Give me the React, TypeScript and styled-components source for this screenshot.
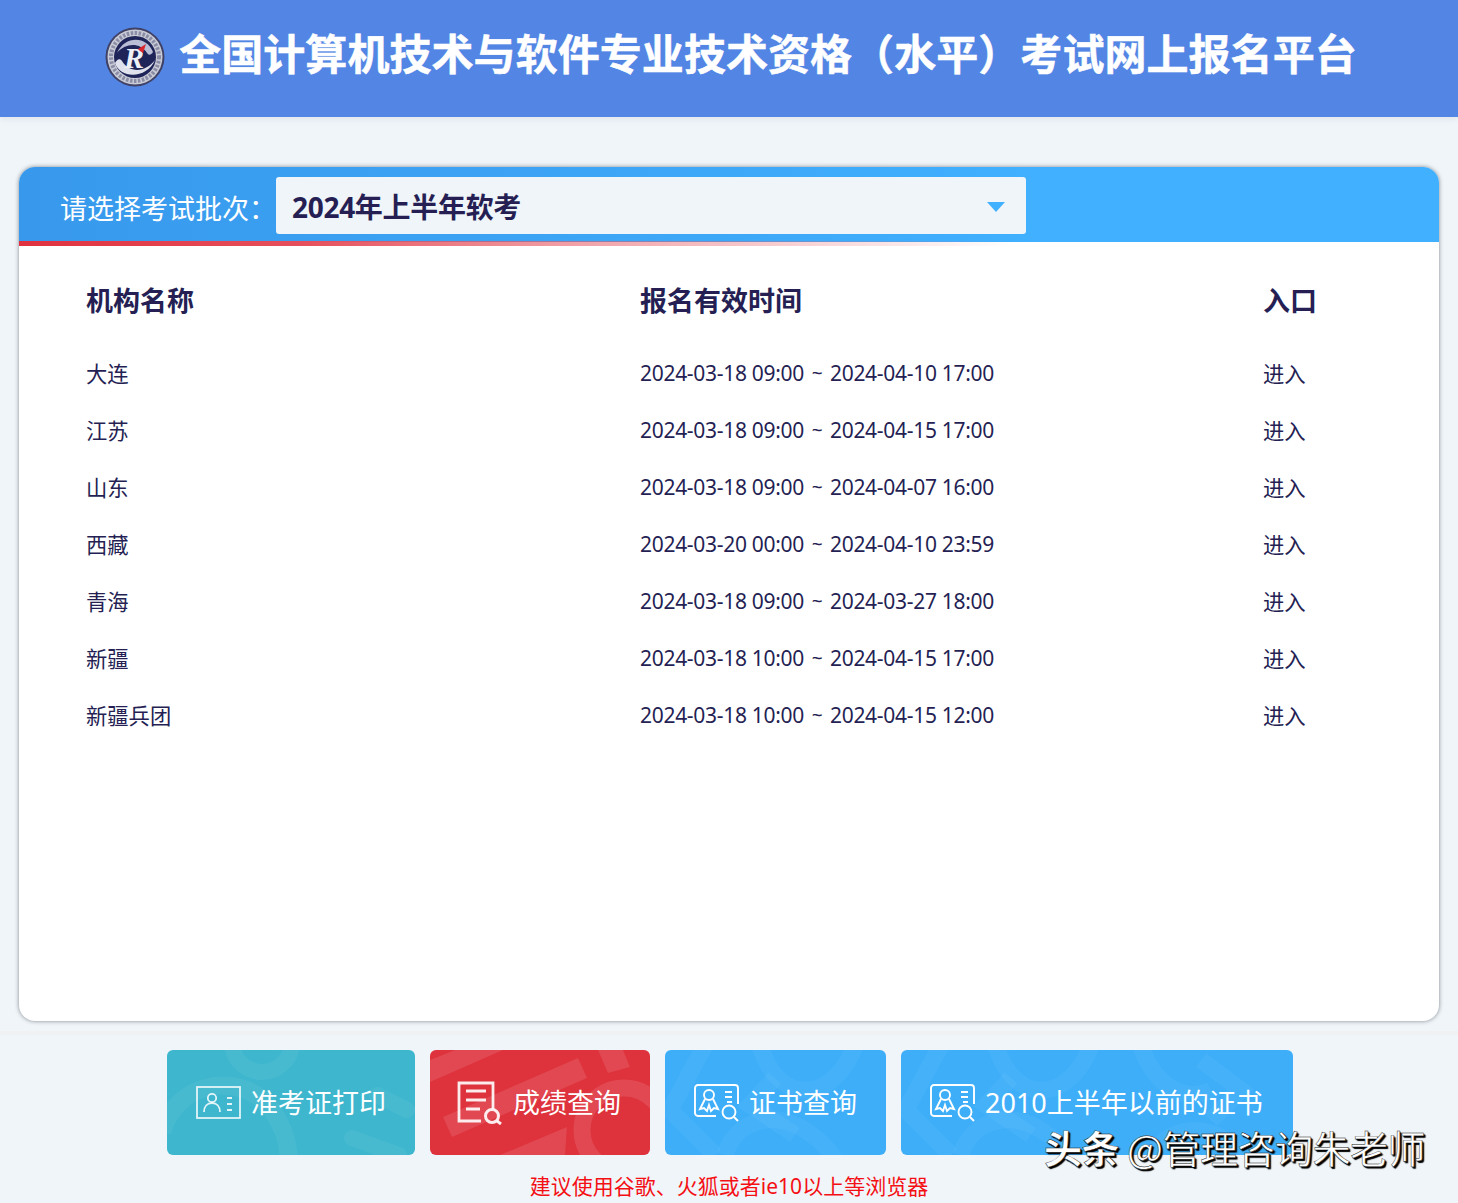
import React from "react";
import styled, { createGlobalStyle } from "styled-components";

const CJK = `"Noto Sans", "Noto Sans CJK SC", sans-serif`;
const INK = "#251f54";

const Global = createGlobalStyle`
  html, body { margin: 0; padding: 0; background: #f0f5f9; }
  body { font-family: ${CJK}; color: ${INK}; }
  * { box-sizing: border-box; }
`;

const Page = styled.div`
  position: relative;
  width: 1458px;
  height: 1203px;
  overflow: hidden;
  background: #f0f5f9;
`;

const Banner = styled.header`
  height: 117px;
  background: #5386e4;
  display: flex;
  align-items: center;
  justify-content: center;
  gap: 14px;
  padding: 0 0 4px 4px;
  box-shadow: 0 2px 6px rgba(120, 140, 170, 0.15);
`;

const Title = styled.h1`
  margin: 0;
  padding-bottom: 6px;
  font-size: 42px;
  line-height: 60px;
  font-weight: 700;
  letter-spacing: 0.06px;
  color: #fff;
  white-space: nowrap;
  -webkit-text-stroke: 0.5px #fff;
`;

const Card = styled.section`
  margin: 50px 19px 0 19px;
  height: 854px;
  background: #fff;
  border-radius: 16px;
  box-shadow: 0 0 4px rgba(50, 60, 70, 0.6);
  overflow: hidden;
`;

const CardHead = styled.div`
  position: relative;
  height: 75px;
  padding: 10px 0 0 41px;
  display: flex;
  align-items: flex-start;
  background: linear-gradient(90deg, #3899ec 0%, #3ea8f8 50%, #40b0ff 72%, #40b0ff 100%);

  &::after {
    content: "";
    position: absolute;
    left: 0;
    right: 0;
    bottom: -4px;
    height: 5px;
    background: linear-gradient(90deg, #e0323f 0%, #e5505c 20%, rgba(230, 90, 100, 0.55) 40%, rgba(230, 90, 100, 0) 70%);
  }
`;

const HeadLabel = styled.span`
  width: 216px;
  padding-top: 2px;
  font-size: 27px;
  line-height: 60px;
  color: #fff;
  white-space: nowrap;
`;

const Picker = styled.div`
  width: 750px;
  height: 57px;
  background: #f0f5f9;
  border-radius: 3px;
  display: flex;
  align-items: center;
  justify-content: space-between;
  padding: 0 21px 0 16px;
  font-size: 28px;
  font-weight: 700;
  letter-spacing: -0.3px;
  color: ${INK};
`;

const Caret = styled.i`
  width: 0;
  height: 0;
  margin-top: 3px;
  border-left: 9px solid transparent;
  border-right: 9px solid transparent;
  border-top: 10px solid #40b0ff;
`;

const Table = styled.div`
  padding: 29px 0 0 67px;
  position: relative;
`;

const Row = styled.div<{ $head?: boolean }>`
  display: grid;
  grid-template-columns: 554px 623px 1fr;
  height: 57px;
  align-items: center;
  font-size: ${(p) => (p.$head ? "27px" : "21.3px")};
  font-weight: ${(p) => (p.$head ? 700 : 400)};
  color: ${INK};
  margin-bottom: ${(p) => (p.$head ? "16px" : "0")};
  white-space: nowrap;
`;

const Org = styled.span`
  font-size: inherit;
`;

const Period = styled.span`
  font-family: "Noto Sans", sans-serif;
  font-size: 21px;
  letter-spacing: -0.3px;
  display: flex;
  align-items: center;
`;

const Tilde = styled.span`
  width: 26px;
  text-align: center;
  font-size: 19px;
`;

const HeadCell = styled.span`
  font-size: 27px;
`;

const Divider = styled.div`
  height: 4px;
  margin-top: 10px;
  background: #f0f1f2;
`;

const Actions = styled.nav`
  display: flex;
  gap: 15px;
  padding: 15px 0 0 167px;
`;

const Action = styled.a<{ $w: number; $bg: string; $gap: number; $pad: number }>`
  position: relative;
  overflow: hidden;
  width: ${(p) => p.$w}px;
  height: 105px;
  border-radius: 6px;
  background: ${(p) => p.$bg};
  color: #fff;
  display: flex;
  align-items: center;
  gap: ${(p) => p.$gap}px;
  padding-left: ${(p) => p.$pad}px;
  font-size: 27px;
  white-space: nowrap;
`;

const Decor = styled.svg`
  position: absolute;
  inset: 0;
  width: 100%;
  height: 100%;
`;

const ActionIcon = styled.svg`
  position: relative;
  flex: none;
`;

const ActionLabel = styled.span`
  position: relative;
  padding-bottom: 2px;
`;

const Note = styled.p`
  margin: 15px 0 0;
  text-align: center;
  font-size: 21px;
  line-height: 32px;
  color: #f40f14;
`;

const Watermark = styled.div`
  position: absolute;
  left: 1044px;
  top: 1121px;
  font-size: 38px;
  line-height: 52px;
  font-family: "Noto Sans CJK SC", "Noto Sans", sans-serif;
  color: #fff;
  white-space: nowrap;
  letter-spacing: -0.5px;
  text-shadow: 2px 2px 1px #000, 1px 1px 1px #000;
  -webkit-text-stroke: 0.4px #111;
`;

const WatermarkBrand = styled.b`
  font-weight: 700;
`;

const Logo = () => (
  <svg width="60" height="60" viewBox="0 0 60 60">
    <circle cx="30" cy="30" r="29.5" fill="#3f4166" />
    <circle cx="30" cy="30" r="27.500" fill="#c9cbd6" />
    <circle cx="30" cy="30" r="24" fill="none" stroke="#8a8da5" strokeWidth="4" strokeDasharray="2.500 1.500" />
    <circle cx="30" cy="30" r="21" fill="#1f2558" />
    <path d="M10 36C15 52 42 52 50 33C41 45 25 47 17 34C15 31 12 32 10 36Z" fill="#dfe2ec" />
    <path d="M48 25C42 9 20 8 12 26C20 16 35 15 42 26C44 29 46 28 48 25Z" fill="#b9bed6" />
    <text x="29" y="41" fontSize="30" fontStyle="italic" fontWeight="700" fontFamily="'Liberation Serif', serif" textAnchor="middle" fill="#eef0f6">R</text>
    <path d="M33 22L41 17L38 26L35 24Z" fill="#d8252e" />
  </svg>
);

const CardIcon = () => (
  <ActionIcon width="46" height="34" viewBox="0 0 46 34" fill="none" stroke="#fff" strokeOpacity="0.85">
    <rect x="1" y="1" width="43" height="31" strokeWidth="1.8" />
    <circle cx="16" cy="12" r="4.2" strokeWidth="1.8" />
    <path d="M8 26c0-6 3.500-9 8-9s8 3 8 9" strokeWidth="1.8" />
    <path d="M31 12h5M31 18h5M31 24h5" strokeWidth="2" />
  </ActionIcon>
);

const ReportIcon = () => (
  <ActionIcon width="46" height="44" viewBox="0 0 46 44" fill="none" stroke="#fff" strokeOpacity="0.9" strokeWidth="2.8">
    <path d="M24 40H2V2h34v26" />
    <path d="M9 10h20M9 19h20M9 28h14" />
    <circle cx="35" cy="35" r="6.500" strokeWidth="3" />
    <path d="M40 40l4 3" strokeWidth="3" />
  </ActionIcon>
);

const CertIcon = () => (
  <ActionIcon width="46" height="38" viewBox="0 0 46 38" fill="none" stroke="#fff" strokeWidth="1.9">
    <path d="M22 32H4a3 3 0 0 1-3-3V4a3 3 0 0 1 3-3h37a3 3 0 0 1 3 3v16" />
    <circle cx="15" cy="11" r="5" />
    <path d="M11 15l-5 10 4-1 3 3 2-6 2 6 3-3 4 1-5-10" />
    <path d="M31 8h7M31 13h7M33 18h5" />
    <circle cx="35" cy="28" r="6.500" />
    <path d="M40 33l4 4" />
  </ActionIcon>
);

const TealDecor = () => (
  <Decor viewBox="0 0 248 105" preserveAspectRatio="none">
    <g fill="none" stroke="#fff" strokeOpacity="0.06">
      <circle cx="95" cy="-8" r="30" strokeWidth="16" />
      <path d="M-5 82C10 30 75 20 105 60C118 80 122 95 122 115" strokeWidth="18" />
      <path d="M185 88L232 105" strokeWidth="16" strokeLinecap="round" />
      <path d="M210 45L240 60" strokeWidth="16" strokeLinecap="round" />
    </g>
  </Decor>
);

const RedDecor = () => (
  <Decor viewBox="0 0 220 105" preserveAspectRatio="none">
    <g fill="#fff" fillOpacity="0.11">
      <path d="M0 32L73 0H25L0 10Z" />
      <path d="M13 67L148 8L157 28L22 87Z" />
      <path d="M168 0H193L200 17L178 23Z" />
      <path d="M70 105L137 77L135 105Z" />
    </g>
    <circle cx="194" cy="80" r="42" fill="none" stroke="#fff" strokeOpacity="0.11" strokeWidth="17" />
  </Decor>
);

const BlueDecor = () => (
  <Decor viewBox="0 0 392 105" preserveAspectRatio="xMinYMin slice">
    <g fill="none" stroke="#fff" strokeOpacity="0.04" strokeWidth="17">
      <path d="M40 -5L5 60L50 105" />
      <path d="M95 -5C105 30 130 50 160 35C175 25 185 10 190 -5" />
      <path d="M110 28L85 55L130 85" />
      <path d="M60 105C70 70 110 60 140 80C155 90 165 100 170 110" />
      <path d="M240 -5C250 30 280 55 310 40" />
      <path d="M300 10L340 40L310 70" />
      <path d="M250 105C270 75 310 70 340 105" />
    </g>
  </Decor>
);

const ROWS: [string, string, string][] = [
  ["大连", "2024-03-18 09:00", "2024-04-10 17:00"],
  ["江苏", "2024-03-18 09:00", "2024-04-15 17:00"],
  ["山东", "2024-03-18 09:00", "2024-04-07 16:00"],
  ["西藏", "2024-03-20 00:00", "2024-04-10 23:59"],
  ["青海", "2024-03-18 09:00", "2024-03-27 18:00"],
  ["新疆", "2024-03-18 10:00", "2024-04-15 17:00"],
  ["新疆兵团", "2024-03-18 10:00", "2024-04-15 12:00"],
];

export default function App() {
  return (
    <Page>
      <Global />
      <Banner>
        <Logo />
        <Title>全国计算机技术与软件专业技术资格（水平）考试网上报名平台</Title>
      </Banner>
      <Card>
        <CardHead>
          <HeadLabel>请选择考试批次：</HeadLabel>
          <Picker>
            <span>2024年上半年软考</span>
            <Caret />
          </Picker>
        </CardHead>
        <Table>
          <Row $head>
            <HeadCell>机构名称</HeadCell>
            <HeadCell>报名有效时间</HeadCell>
            <HeadCell>入口</HeadCell>
          </Row>
          {ROWS.map(([org, from, to]) => (
            <Row key={org}>
              <Org>{org}</Org>
              <Period>
                <span>{from}</span>
                <Tilde>~</Tilde>
                <span>{to}</span>
              </Period>
              <Org>进入</Org>
            </Row>
          ))}
        </Table>
      </Card>
      <Divider />
      <Actions>
        <Action $w={248} $bg="#3db6ce" $gap={9} $pad={29}>
          <TealDecor />
          <CardIcon />
          <ActionLabel>准考证打印</ActionLabel>
        </Action>
        <Action $w={220} $bg="#de323c" $gap={10} $pad={27}>
          <RedDecor />
          <ReportIcon />
          <ActionLabel>成绩查询</ActionLabel>
        </Action>
        <Action $w={221} $bg="#3eaef9" $gap={9} $pad={29}>
          <BlueDecor />
          <CertIcon />
          <ActionLabel>证书查询</ActionLabel>
        </Action>
        <Action $w={392} $bg="#3eaef9" $gap={9} $pad={29}>
          <BlueDecor />
          <CertIcon />
          <ActionLabel>2010上半年以前的证书</ActionLabel>
        </Action>
      </Actions>
      <Note>建议使用谷歌、火狐或者ie10以上等浏览器</Note>
      <Watermark>
        <WatermarkBrand>头条</WatermarkBrand> @管理咨询朱老师
      </Watermark>
    </Page>
  );
}
